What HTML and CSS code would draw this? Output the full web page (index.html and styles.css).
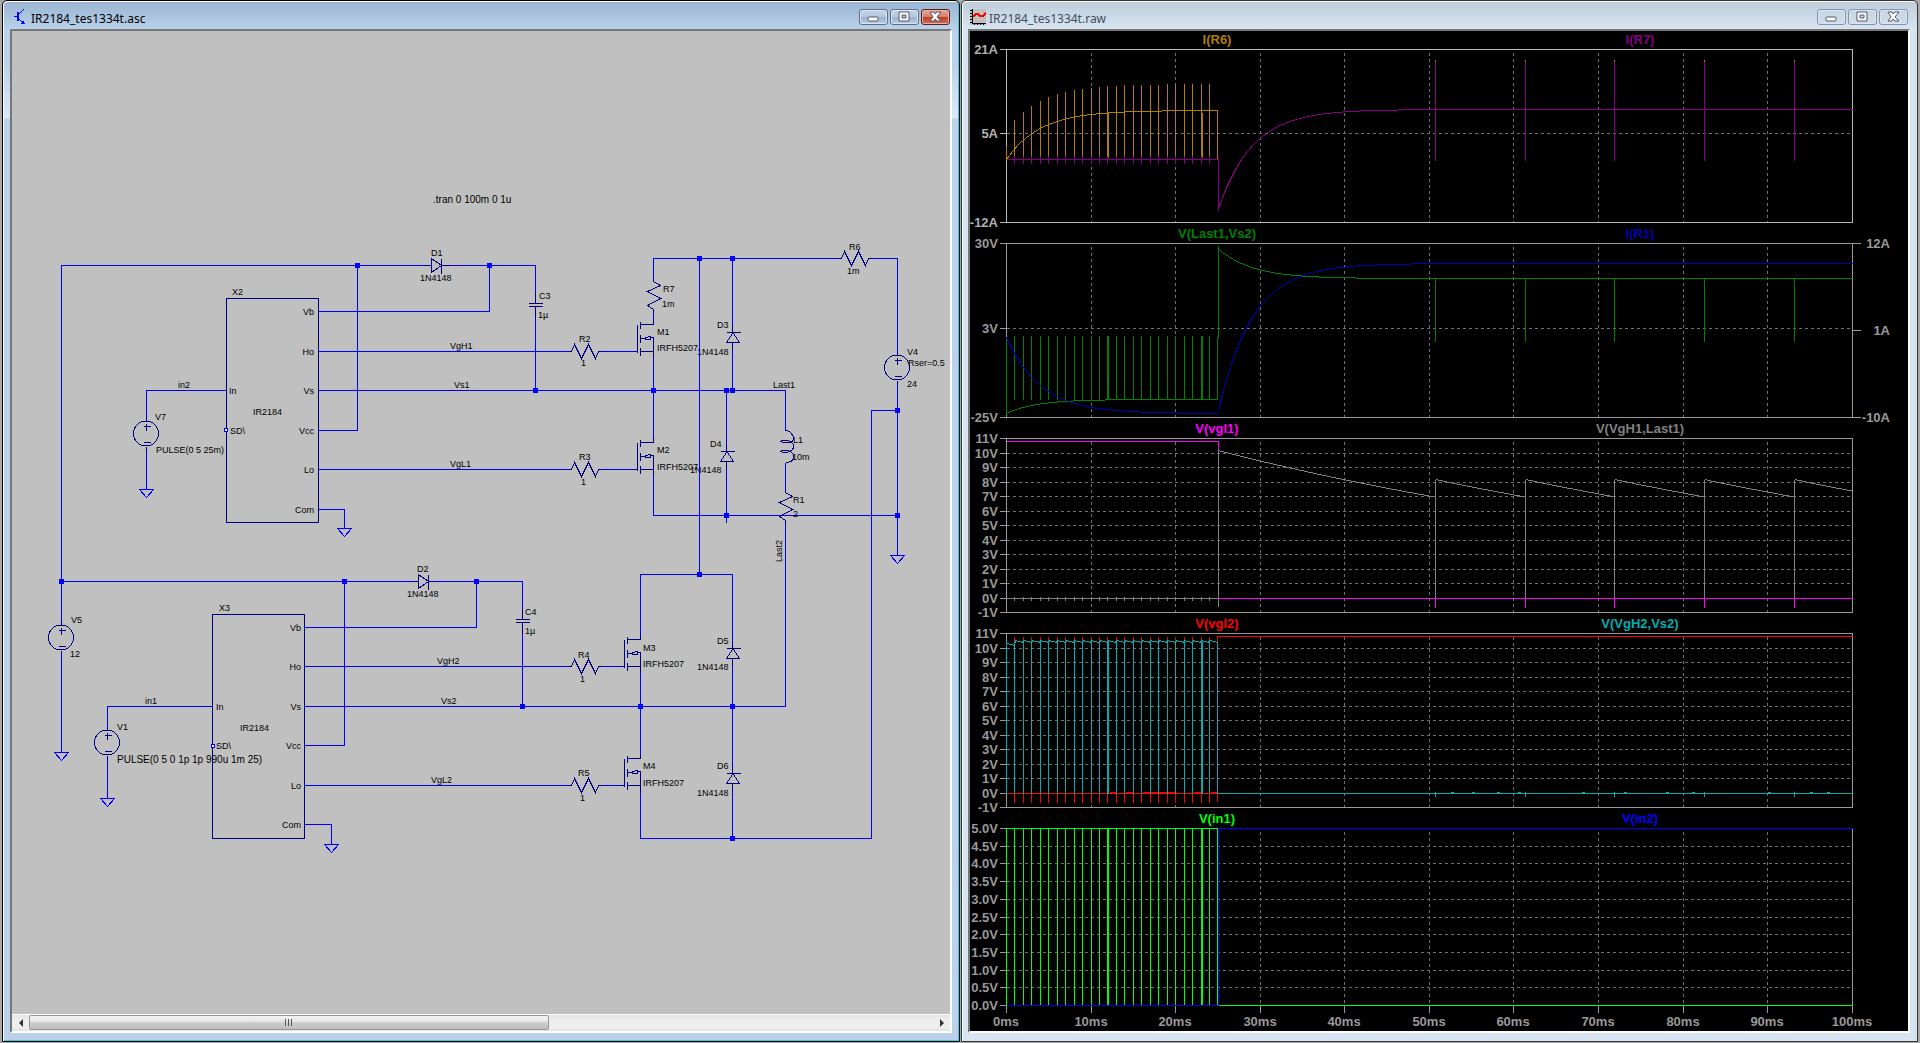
FILE: index.html
```html
<!DOCTYPE html>
<html lang="en">
<head>
    <meta charset="UTF-8">
    <meta name="viewport" content="width=device-width, initial-scale=1.0">
    <title>IR2184_tes1334t</title>
    <link rel="stylesheet" href="styles.css">
</head>
<body>
    <main class="desktop">
        <section class="window active">
            <header class="titlebar">
                <svg class="app-icon" viewBox="0 0 16 16" aria-hidden="true">
                    <path d="M2 7h4M12 0l-5 5M7 10l4 4" fill="none" stroke="#0000ff"/>
                    <path d="M5 3h2v9h-2zM13 15h-5l2-1 1-3z" fill="#0000ff"/>
                </svg>
                <h1>IR2184_tes1334t.asc</h1>
                <div class="controls">
                    <button type="button" aria-label="Minimize"><svg viewBox="0 0 15 12"><rect x="2" y="6" width="10" height="4" rx="1"/></svg></button>
                    <button type="button" aria-label="Maximize"><svg viewBox="0 0 15 12"><path fill-rule="evenodd" d="M2 1h10v9H2zM5 4v3h4V4z"/></svg></button>
                    <button type="button" class="close" aria-label="Close"><svg viewBox="0 0 15 12"><path d="M2 1h4l1 2 2-2h4L9 6l4 4H9L7 8l-1 2H2l3-4z"/></svg></button>
                </div>
            </header>
            <div class="frame">
                <svg class="schematic" viewBox="12 31 938 983" preserveAspectRatio="xMinYMin meet" role="img" aria-label="Half bridge schematic">
                    <defs>
                        <path id="res-h" d="M-3 0H0L3 -7L10 7L17 -7L24 7L27 0H30"/>
                        <path id="res-v" d="M0 -3V0L7 4L-6 10L7 17L-6 24L0 28V31"/>
                        <path id="diode-r" d="M-7 0H0M0 -7V7L10 0ZM10 -7V8M10 0H17"/>
                        <path id="diode-u" d="M0 -7V0M-6 0H8M0 1L-6 10H7L1 1M0 10V17"/>
                        <path id="cap" d="M0 -11V0M-7 0H7M-7 3H7M0 3V14"/>
                        <path id="source" d="M0 -16V-12M0 13V16M-3 -7H4M0 -10V-3M-3 9H4M-13 0a12 12 0 0 1 25 0a12 12 0 0 1 -25 0"/>
                        <path id="ground" d="M-7 0H7L0 8Z"/>
                        <path id="mosfet" d="M0 -27V1M3 -30V-23M3 -17V-9M3 -4V4M3 -27H16V-32M3 0H16M16 -14V6M3 -13H6L12 -15H13V-12H10L6 -13M13 -14H16M-3 0H0"/>
                        <rect id="node" x="-2" y="-2" width="5" height="5"/>
                    </defs>

                    <g class="part-text">
                        <text class="directive" x="433" y="203">.tran 0 100m 0 1u</text>
                        <text x="431" y="256">D1</text><text x="420" y="281">1N4148</text>
                        <text x="539" y="299">C3</text><text x="538" y="318">1µ</text>
                        <text x="579" y="342">R2</text><text x="581" y="366">1</text>
                        <text x="579" y="460">R3</text><text x="581" y="485">1</text>
                        <text x="663" y="292">R7</text><text x="662" y="307">1m</text>
                        <text x="849" y="250">R6</text><text x="847" y="274">1m</text>
                        <text x="657" y="335">M1</text><text x="657" y="351">IRFH5207</text>
                        <text x="657" y="453">M2</text><text x="657" y="470">IRFH5207</text>
                        <text x="717" y="328">D3</text><text x="697" y="355">1N4148</text>
                        <text x="710" y="447">D4</text><text x="690" y="473">1N4148</text>
                        <text x="907" y="355">V4</text><text x="908" y="366">Rser=0.5</text><text x="907" y="387">24</text>
                        <text x="793" y="443">L1</text><text x="792" y="460">10m</text>
                        <text x="793" y="503">R1</text><text x="793" y="517">2</text>
                        <text x="155" y="420">V7</text><text x="156" y="453">PULSE(0 5 25m)</text>
                        <text x="71" y="623">V5</text><text x="70" y="657">12</text>
                        <text x="117" y="730">V1</text><text class="directive" x="117" y="763">PULSE(0 5 0 1p 1p 990u 1m 25)</text>
                        <text x="417" y="572">D2</text><text x="407" y="597">1N4148</text>
                        <text x="525" y="615">C4</text><text x="525" y="634">1µ</text>
                        <text x="578" y="658">R4</text><text x="580" y="682">1</text>
                        <text x="578" y="776">R5</text><text x="580" y="801">1</text>
                        <text x="643" y="651">M3</text><text x="643" y="667">IRFH5207</text>
                        <text x="643" y="769">M4</text><text x="643" y="786">IRFH5207</text>
                        <text x="717" y="644">D5</text><text x="697" y="670">1N4148</text>
                        <text x="717" y="769">D6</text><text x="697" y="796">1N4148</text>
                    </g>

                    <g class="part-text">
                        <text x="178" y="388">in2</text><text x="145" y="704">in1</text>
                        <text x="450" y="349">VgH1</text><text x="454" y="388">Vs1</text><text x="450" y="467">VgL1</text>
                        <text x="437" y="664">VgH2</text><text x="441" y="704">Vs2</text><text x="431" y="783">VgL2</text>
                        <text x="773" y="388">Last1</text>
                        <text transform="translate(782 562) rotate(-90)">Last2</text>
                    </g>

                    <g class="part-text">
                        <text x="232" y="295">X2</text><text x="253" y="415">IR2184</text>
                        <text x="229" y="394">In</text><text x="230" y="434">SD\</text>
                        <g text-anchor="end">
                            <text x="314" y="315">Vb</text><text x="314" y="355">Ho</text><text x="314" y="394">Vs</text>
                            <text x="314" y="434">Vcc</text><text x="314" y="473">Lo</text><text x="314" y="513">Com</text>
                        </g>
                        <text x="219" y="611">X3</text><text x="240" y="731">IR2184</text>
                        <text x="216" y="710">In</text><text x="216" y="749">SD\</text>
                        <g text-anchor="end">
                            <text x="301" y="631">Vb</text><text x="301" y="670">Ho</text><text x="301" y="710">Vs</text>
                            <text x="301" y="749">Vcc</text><text x="301" y="789">Lo</text><text x="301" y="828">Com</text>
                        </g>
                    </g>

                    <!-- half unit shift puts the hairlines on whole pixels -->
                    <g class="wires" transform="translate(.5 .5)">
                        <path d="M424 265H61V624M61 650V752M448 265H535V292M357 265V430H318M318 311H489V265M535 317V390"/>
                        <path d="M318 351H568M601 351H634M318 390H785V430M318 469H568M601 469H634M318 509H344V528"/>
                        <path d="M226 390H146V417M146 449V489"/>
                        <path d="M653 278V258H838M871 258H897V351M653 312V319M653 357V437M653 475V515H897"/>
                        <path d="M732 258V325M732 349V390M726 390V444M726 468V522M699 258V574"/>
                        <path d="M897 383V555M897 410H871V838H640V791"/>
                        <path d="M785 462V489M785 523V706H304M640 634V574H732V641M732 665V766M732 790V838"/>
                        <path d="M61 581H411M435 581H522V608M522 633V706M344 581V745H304M304 627H476V581"/>
                        <path d="M304 666H568M601 666H621M304 785H568M601 785H621M640 672V753M304 824H331V844"/>
                        <path d="M212 706H107V726M107 758V798"/>
                        <use href="#ground" x="344" y="528"/>
                        <use href="#ground" x="146" y="489"/>
                        <use href="#ground" x="897" y="555"/>
                        <use href="#ground" x="61" y="752"/>
                        <use href="#ground" x="107" y="798"/>
                        <use href="#ground" x="331" y="844"/>
                    </g>

                    <g class="parts" transform="translate(.5 .5)">
                        <path d="M226 298H318V522H226ZM212 614H304V838H212Z"/>
                        <use href="#diode-r" x="431" y="265"/><use href="#diode-r" x="418" y="581"/>
                        <use href="#cap" x="535" y="303"/><use href="#cap" x="522" y="619"/>
                        <use href="#res-h" x="571" y="351"/><use href="#res-h" x="571" y="469"/>
                        <use href="#res-h" x="571" y="666"/><use href="#res-h" x="571" y="785"/>
                        <use href="#res-h" x="841" y="258"/>
                        <use href="#res-v" x="653" y="281"/><use href="#res-v" x="785" y="492"/>
                        <use href="#mosfet" x="637" y="351"/><use href="#mosfet" x="637" y="469"/>
                        <use href="#mosfet" x="624" y="666"/><use href="#mosfet" x="624" y="785"/>
                        <use href="#diode-u" x="732" y="332"/><use href="#diode-u" x="726" y="451"/>
                        <use href="#diode-u" x="732" y="648"/><use href="#diode-u" x="732" y="773"/>
                        <use href="#source" x="897" y="367"/><use href="#source" x="146" y="433"/>
                        <use href="#source" x="61" y="637"/><use href="#source" x="107" y="742"/>
                        <path d="M785 430C790 430 793 435 793 438C793 443 783 443 780 441C783 438 793 440 793 446C793 452 783 453 780 451C783 448 793 450 793 456C793 460 790 462 785 462"/>
                    </g>

                    <g class="nodes">
                        <use href="#node" x="357" y="265"/><use href="#node" x="489" y="265"/><use href="#node" x="535" y="390"/>
                        <use href="#node" x="699" y="258"/><use href="#node" x="732" y="258"/><use href="#node" x="653" y="390"/>
                        <use href="#node" x="726" y="390"/><use href="#node" x="732" y="390"/><use href="#node" x="897" y="410"/>
                        <use href="#node" x="726" y="515"/><use href="#node" x="897" y="515"/><use href="#node" x="699" y="574"/>
                        <use href="#node" x="61" y="581"/><use href="#node" x="344" y="581"/><use href="#node" x="476" y="581"/>
                        <use href="#node" x="522" y="706"/><use href="#node" x="640" y="706"/><use href="#node" x="732" y="706"/>
                        <use href="#node" x="732" y="838"/>
                    </g>
                    <g class="pins" transform="translate(.5 .5)">
                        <rect x="224" y="428" width="3" height="3"/>
                        <rect x="211" y="744" width="3" height="3"/>
                    </g>
                </svg>
                <div class="scrollbar">
                    <button type="button" aria-label="Scroll left"><svg viewBox="0 0 8 8"><path d="M6 0v8L2 4z"/></svg></button>
                    <div class="track"><div class="thumb"><i></i><i></i><i></i></div></div>
                    <button type="button" aria-label="Scroll right"><svg viewBox="0 0 8 8"><path d="M2 0v8l4-4z"/></svg></button>
                </div>
            </div>
        </section>

        <section class="window">
            <header class="titlebar">
                <svg class="app-icon" viewBox="0 0 16 16" aria-hidden="true">
                    <path d="M0 0h16v16H0z" fill="#c0c0c0"/>
                    <path d="M2 0v14h14M0 1h2M0 4h2M0 7h2M0 10h2M0 13h2M4 14v2M7 14v2M10 14v2M13 14v2" fill="none" stroke="#000"/>
                    <path d="M3 8l3-3h2l2 2h3l3-3" fill="none" stroke="#ff0000" stroke-width="2"/>
                </svg>
                <h2>IR2184_tes1334t.raw</h2>
                <div class="controls">
                    <button type="button" aria-label="Minimize"><svg viewBox="0 0 15 12"><rect x="2" y="6" width="10" height="4" rx="1"/></svg></button>
                    <button type="button" aria-label="Maximize"><svg viewBox="0 0 15 12"><path fill-rule="evenodd" d="M2 1h10v9H2zM5 4v3h4V4z"/></svg></button>
                    <button type="button" aria-label="Close"><svg viewBox="0 0 15 12"><path d="M2 1h4l1 2 2-2h4L9 6l4 4H9L7 8l-1 2H2l3-4z"/></svg></button>
                </div>
            </header>
            <div class="frame">
                <svg class="plots" id="plots" viewBox="970 31 938 1000" preserveAspectRatio="xMinYMin meet" role="img" aria-label="Waveforms"></svg>
            </div>
        </section>
    </main>
    <script src="plots.js"></script>
</body>
</html>
```
FILE: styles.css
```css
* { box-sizing: border-box; }
body { margin: 0; background: #a8a8a8; font-family: "Noto Sans", Tahoma, sans-serif; }
.desktop { display: grid; grid-template-columns: 958fr 957fr; gap: 1px; height: 100vh; padding: 0 2px 1px; }

/* windows */
.window { display: flex; flex-direction: column; min-width: 0; border: 1px solid #333; border-radius: 5px 5px 0 0; padding: 0 7px 8px 6px; background: linear-gradient(#bfccda 0, #d7e4f2 28px); box-shadow: inset 1px 1px #fff; }
.window.active { border-color: #000; padding: 0 7px 8px; background: linear-gradient(#99b4d1 0, #b9d1ea 28px, #b9d1ea 60px, #dce9f6 117px, #b9d1ea 118px); box-shadow: inset 1px 1px #fff, inset -1px -1px #2fd0ee; }
.titlebar { display: flex; align-items: center; gap: 3px; height: 28px; padding: 4px 2px 0; }
.titlebar h1, .titlebar h2 { margin: 0; padding-top: 3px; font-size: 12px; line-height: 16px; font-weight: normal; color: #000; white-space: nowrap; }
.titlebar h2 { color: #444e5a; }
.app-icon { width: 16px; height: 16px; shape-rendering: crispEdges; }
.controls { display: flex; gap: 2px; margin-left: auto; }
.controls button { display: flex; align-items: center; justify-content: center; width: 29px; height: 16px; padding: 0; border: 1px solid #8593ad; border-radius: 3px; background: linear-gradient(#c8d5e4, #d0dcea); box-shadow: inset 0 0 0 1px #dbe6f2; }
.controls svg { width: 15px; height: 12px; fill: #fff; stroke: #555a6b; }
.active .controls button { border-color: #5d6f8b; background: linear-gradient(#c3d3e5 0, #b4c8de 48%, #98b1cc 50%, #b8cde3 100%); }
.active .controls .close { border-color: #5a1c1c; background: linear-gradient(#e5a99c 0, #d57d6b 48%, #bb4029 50%, #d0694f 100%); box-shadow: inset 0 0 0 1px #e6b2a6; }
.frame { display: flex; flex-direction: column; flex: 1; min-height: 0; border: 2px solid; border-color: #777 #fff #fff #777; }

/* schematic */
.schematic { flex: 1; width: 100%; min-height: 0; background: #c0c0c0; shape-rendering: crispEdges; }
.part-text { font-family: "Liberation Sans", Arial, sans-serif; font-size: 9px; fill: #000; }
.directive { font-size: 10px; }
.wires { fill: none; stroke: #0000ff; }
.parts { fill: none; stroke: #000080; }
.nodes { fill: #0000ff; }
.pins { fill: #fff; stroke: #0000ff; }
.scrollbar { display: flex; height: 17px; border-top: 1px solid #fff; background: linear-gradient(#e3e3e3, #eee 30%, #eee 80%, #e3e3e3); }
.scrollbar button { width: 17px; padding: 0; border: 0; background: none; line-height: 0; }
.scrollbar button svg { width: 8px; height: 8px; fill: #333; }
.track { flex: 1; }
.thumb { display: flex; align-items: center; justify-content: center; gap: 2px; width: 57.5%; height: 15px; border: 1px solid #979797; border-radius: 2px; background: linear-gradient(#f3f3f3 0, #e4e4e6 48%, #cfcfd1 50%, #bdbdc0 100%); }
.thumb i { width: 1px; height: 7px; background: #555; }

/* waveforms */
.plots { flex: 1; width: 100%; min-height: 0; background: #000; shape-rendering: crispEdges; }
.plots text { font-family: "Liberation Sans", Arial, sans-serif; font-size: 13px; font-weight: bold; fill: #999; }
.plots path { fill: none; stroke-width: 1px; }
.axis { stroke: #999; }
.selected .axis { stroke: #b8b8b8; }
.plots .selected .scale { fill: #b0b0b0; }
.grid { stroke: #707070; stroke-dasharray: 3 3; }
.orange { stroke: #b07f00; }
.purple { stroke: #850085; }
.green { stroke: #008000; }
.navy { stroke: #0000b0; }
.magenta { stroke: #ff00ff; }
.gray { stroke: #808080; }
.red { stroke: #ff0000; }
.teal { stroke: #00b0b0; }
.lime { stroke: #00ff00; }
.blue { stroke: #0000ff; }
.plots .t-orange { fill: #b07f00; }
.plots .t-purple { fill: #850085; }
.plots .t-green { fill: #008000; }
.plots .t-navy { fill: #0000b0; }
.plots .t-magenta { fill: #ff00ff; }
.plots .t-gray { fill: #808080; }
.plots .t-red { fill: #ff0000; }
.plots .t-teal { fill: #00b0b0; }
.plots .t-lime { fill: #00ff00; }
.plots .t-blue { fill: #0000ff; }
```
FILE: plots.js
```js
const svg = document.getElementById('plots');
const LEFT = 1006, RIGHT = 1852, PX_PER_MS = 8.458;
const kicks = [50.7, 61.35, 71.9, 82.5, 93.15];

// time in ms -> x
const X = t => Math.round(LEFT + t * PX_PER_MS);

function add(parent, tag, attrs, text) {
    const el = document.createElementNS('http://www.w3.org/2000/svg', tag);
    for (const key in attrs) el.setAttribute(key, attrs[key]);
    if (text) el.textContent = text;
    parent.appendChild(el);
    return el;
}

function label(parent, x, y, text, anchor, cls) {
    add(parent, 'text', { x, y, 'text-anchor': anchor, class: cls }, text);
}

// half unit shift keeps 1px lines on whole pixels
function trace(parent, cls, d) {
    add(parent, 'path', { class: cls, d, transform: 'translate(.5 .5)' });
}

// stepped curve, one sample per pixel
function curve(t0, t1, fn) {
    let d = '';
    for (let x = X(t0); x <= X(t1); x++) {
        const t = (x - LEFT) / PX_PER_MS;
        d += (d ? 'L' : 'M') + x + ' ' + Math.round(fn(t));
    }
    return d;
}

// vertical lines, one each ms; the ones at 12ms and 23ms are two pixels wide
function pulses(from, to, top, bottom, wide) {
    let d = '';
    for (let t = from; t <= to; t++) {
        const y = typeof top === 'function' ? Math.round(top(t)) : top;
        d += `M${X(t)} ${y}V${bottom}`;
        if (wide && (t === 12 || t === 23)) d += `M${X(t) + 1} ${wide}V${bottom}`;
    }
    return d;
}

function atKicks(top, bottom) {
    return kicks.map(t => `M${X(t)} ${top}V${bottom}`).join('');
}

function pane(top, bottom, labels, names, opts = {}) {
    const g = add(svg, 'g', opts.selected ? { class: 'selected' } : {});
    let grid = '', axis = `M${LEFT} ${top}H${RIGHT}V${bottom}H${LEFT}Z`;
    for (let t = 10; t < 100; t += 10) grid += `M${X(t)} ${top + 3}V${bottom}`;
    labels.forEach((text, i) => {
        const y = opts.ys ? opts.ys[i] : Math.round(top + (bottom - top) * i / (labels.length - 1));
        if (i && i < labels.length - 1) grid += `M${LEFT} ${y}H${RIGHT}`;
        axis += `M${LEFT} ${y}h-7`;
        label(g, 998, y + 5, text, 'end', 'scale');
    });
    trace(g, 'grid', grid);
    trace(g, 'axis', axis);
    names.forEach(([text, cls], i) => label(g, i ? 1640 : 1217, top - 5, text, 'middle', 't-' + cls));
    return g;
}

const decay = (t, tau) => Math.exp(-t / tau);

// currents
let g = pane(49, 222, ['21A', '5A', '-12A'], [['I(R6)', 'orange'], ['I(R7)', 'purple']], { ys: [49, 133, 222], selected: true });
trace(g, 'orange', curve(0, 25, t => 110 + 49 * decay(t, 4)) + 'V159M1006 145V159');
trace(g, 'orange', pulses(1, 24, t => 83 + 46 * decay(t, 4), 157, 112));
trace(g, 'orange', atKicks(59, 70));
trace(g, 'purple', 'M1006 159H1218V210' + pulses(1, 24, 155, 163));
trace(g, 'purple', curve(25.06, 100, t => 109 + 101 * decay(t - 25, 4)) + atKicks(61, 160));

// load voltage and current
g = pane(243, 417, ['30V', '3V', '-25V'], [['V(Last1,Vs2)', 'green'], ['I(R1)', 'navy']], { ys: [243, 328, 417] });
trace(g, 'axis', 'M1852 243h8M1852 330h8M1852 417h8');
label(g, 1890, 248, '12A', 'end', 'scale');
label(g, 1890, 335, '1A', 'end', 'scale');
label(g, 1890, 422, '-10A', 'end', 'scale');
trace(g, 'green', curve(0, 25, t => 399 + 14 * decay(t, 3.5)) + 'V337H1218V245');
trace(g, 'green', 'M1006 337V414' + pulses(1, 24, 335, 399, 335));
trace(g, 'green', curve(25.06, 100, t => 278 - 30 * decay(t - 25, 4)) + atKicks(278, 341));
trace(g, 'navy', curve(0, 25.06, t => 413 - 76 * decay(t, 4)) + curve(25.06, 100, t => 263 + 150 * decay(t - 25, 4)));

// gate drive 1
const volts = ['11V', '10V', '9V', '8V', '7V', '6V', '5V', '4V', '3V', '2V', '1V', '0V', '-1V'];
g = pane(438, 612, volts, [['V(vgl1)', 'magenta'], ['V(VgH1,Last1)', 'gray']]);
let saw = 'M1006 598H1218M1218 606V449' + curve(25.06, kicks[0], t => 598 - 148 * decay(t - 25, 68));
kicks.forEach((t0, i) => {
    saw += `M${X(t0)} 598V479` + curve(t0, kicks[i + 1] || 100, t => 598 - 119 * decay(t - t0, 67));
});
trace(g, 'gray', saw + pulses(1, 24, 596, 600));
trace(g, 'magenta', 'M1006 441H1218V449M1218 598H1852' + atKicks(598, 607));

// gate drive 2
g = pane(633, 807, volts, [['V(vgl2)', 'red'], ['V(VgH2,Vs2)', 'teal']]);
trace(g, 'red', 'M1006 793H1218M1217 801V636H1852' + pulses(1, 24, 636, 802));
trace(g, 'red', 'M1109 792H1116M1125 792H1133M1142 792H1175M1193 792H1200M1210 792H1217');
trace(g, 'teal', curve(0, 25, t => (t < 1 ? 643 : 640) + 2 * (t % 1)));
trace(g, 'teal', pulses(0, 25, 641, 793, 641) + 'M1217 793H1852' + atKicks(791, 796));
trace(g, 'teal', [51.5, 54, 57, 59.5, 67, 72, 77, 80, 89, 94, 96].map(t => `M${X(t) + 8} 792h3`).join(''));

// logic inputs
g = pane(828, 1005, ['5.0V', '4.5V', '4.0V', '3.5V', '3.0V', '2.5V', '2.0V', '1.5V', '1.0V', '0.5V', '0.0V'], [['V(in1)', 'lime'], ['V(in2)', 'blue']]);
trace(g, 'lime', 'M1006 828H1217M1218 1005H1852' + pulses(0, 25, 828, 1005, 828));
trace(g, 'blue', 'M1006 1005H1218V828H1852');
for (let t = 0; t <= 100; t += 10) {
    trace(g, 'axis', `M${X(t)} 1005v7`);
    label(g, X(t), 1026, t + 'ms', 'middle', 'scale');
}
```
